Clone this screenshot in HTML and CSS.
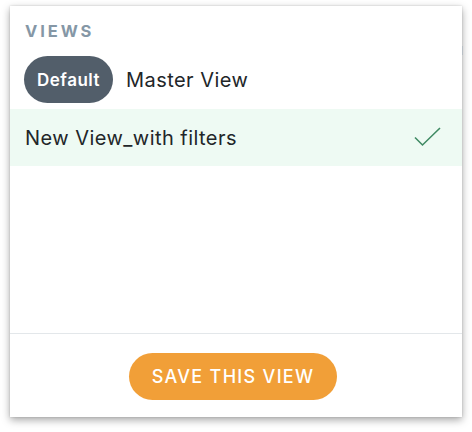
FILE: index.html
```html
<!DOCTYPE html>
<html>
<head>
<meta charset="utf-8">
<link rel="stylesheet" href="styles.css">
</head>
<body>
<div class="stage">
  <div class="panel">
    <div class="heading">VIEWS</div>
    <div class="list">
      <div class="row master">
        <span class="pill">Default</span>
        <span class="name">Master View</span>
      </div>
      <div class="row selected">
        <span class="name">New View_with filters</span>
        <svg class="check" width="28" height="21" viewBox="0 0 28 21">
          <path d="M1 10.5 L8.5 18 L26 1" fill="none" stroke="#3f8a63" stroke-width="1.6"/>
        </svg>
      </div>
    </div>
    <div class="footer">
      <button class="save">SAVE THIS VIEW</button>
    </div>
  </div>
  <span class="edge-mark"></span>
</div>
</body>
</html>
```
FILE: styles.css
```css
html, body {
  margin: 0;
  padding: 0;
  background: #ffffff;
}
body {
  font-family: Inter, "Noto Sans", sans-serif;
  color: #1f2326;
}
.stage {
  position: relative;
  padding: 6px 10px 15px 10px;
}
.panel {
  width: 452px;
  height: 411px;
  background: #ffffff;
  box-shadow: 0 3px 8px rgba(0, 0, 0, 0.35), 0 0 2px rgba(0, 0, 0, 0.15);
  display: flex;
  flex-direction: column;
}
.heading {
  padding: 15px 0 0 15px;
  font-size: 16.5px;
  line-height: 20px;
  font-weight: 700;
  letter-spacing: 2.9px;
  color: #8597a6;
}
.list {
  flex: 1;
  display: flex;
  flex-direction: column;
  padding-top: 15px;
}
.row {
  display: flex;
  align-items: center;
}
.master {
  padding: 0 0 6px 14px;
  gap: 13px;
}
.pill {
  height: 47px;
  padding: 0 13px 0 13px;
  display: flex;
  align-items: center;
  background: #525e6a;
  color: #ffffff;
  border-radius: 24px;
  font-size: 17px;
  font-weight: 600;
  letter-spacing: 0.5px;
}
.name {
  font-size: 20px;
  letter-spacing: 0.45px;
  color: #222629;
}
.selected {
  height: 57px;
  padding: 0 20px 0 15px;
  background: #eefaf3;
  justify-content: space-between;
}
.check {
  display: block;
}
.footer {
  border-top: 1px solid #e3e7ea;
  height: 84px;
  display: flex;
  justify-content: center;
  padding: 19px 6px 0 0;
  box-sizing: border-box;
}
.save {
  width: 208px;
  height: 47px;
  border: none;
  border-radius: 24px;
  background: #f19f38;
  color: #ffffff;
  font-family: Inter, "Noto Sans", sans-serif;
  font-size: 18px;
  font-weight: 500;
  letter-spacing: 1.3px;
  padding: 0;
}
.edge-mark {
  position: absolute;
  left: 462px;
  top: 46px;
  width: 1px;
  height: 9px;
  background: #b8bec4;
}
```
